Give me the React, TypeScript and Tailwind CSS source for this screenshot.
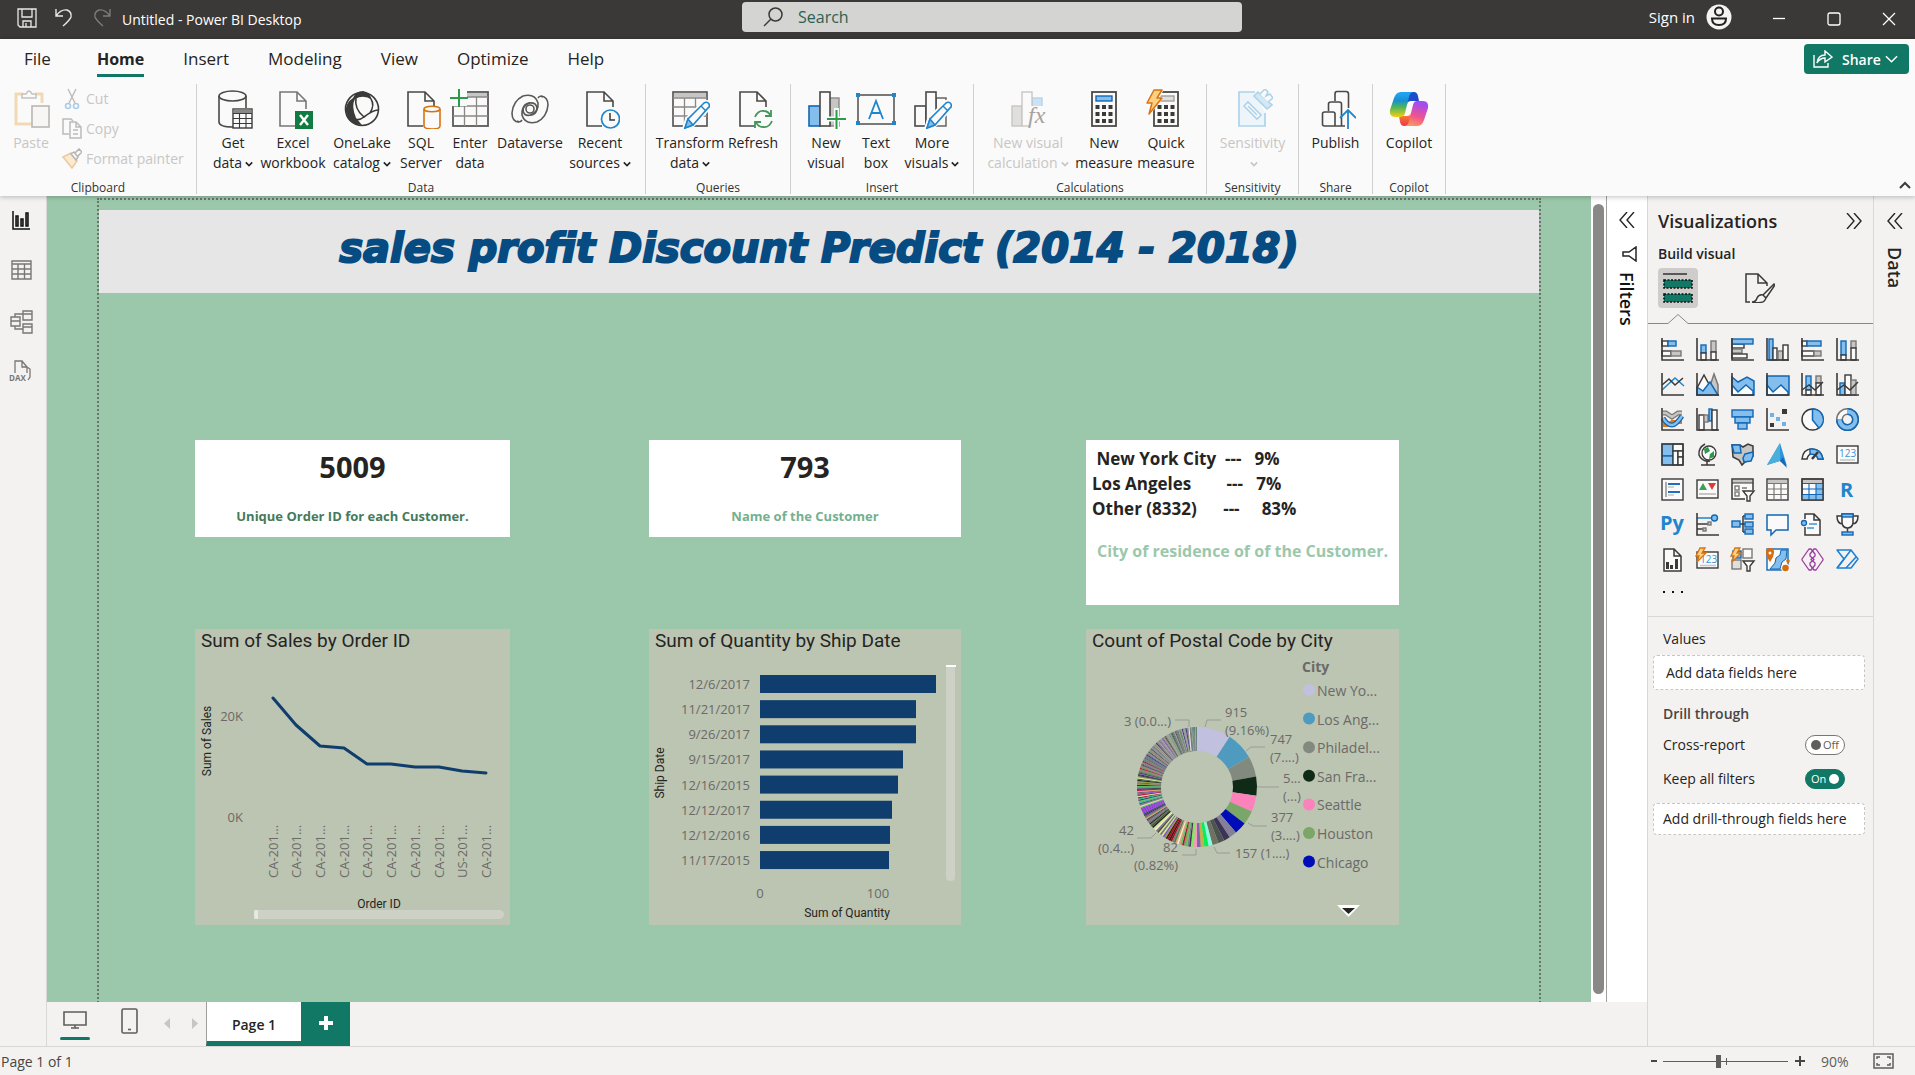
import React from "react";

const D = "#3b3a39";
const B = "#1267b4";
const LB = "#83beec";
const G = "#797775";
const LG = "#c8c6c4";
const W = "#fafafa";
const NAVY = "#0f3d6d";

type BoxProps = { x: number; y: number; w: number; h: number; f?: string; s?: string; sw?: number };
function R({ x, y, w, h, f = W, s = D, sw = 1.4 }: BoxProps) {
  return <rect x={x} y={y} width={w} height={h} fill={f} stroke={s} strokeWidth={sw} />;
}
function P({ d, s = D, f = "none", w = 1.5 }: { d: string; s?: string; f?: string; w?: number }) {
  return <path d={d} stroke={s} fill={f} strokeWidth={w} />;
}

/* ---------- ribbon icons, 40 x 40 ---------- */

function Icon40({ children }: { children: React.ReactNode }) {
  return (
    <svg viewBox="0 0 40 40" className="h-10 w-10" fill="none" aria-hidden="true">
      {children}
    </svg>
  );
}
const docPath = "M33 18V12L24 3H7V37H22M24 3V12H33";
const Doc = () => <P d={docPath} s="#4a4948" f={W} w={1.6} />;

const Bolt = () => (
  <path d="M8 1H16L11 9H16L3 25L6 14H1Z" fill="#fcd083" stroke="#d9730f" strokeWidth="1.5" strokeLinejoin="round" />
);
const Pen = () => (
  <g>
    <path d="M14 40L17 30L34 13Q37 12 39 14Q41 17 39 19L23 36Z" fill={W} stroke={W} strokeWidth="4" />
    <path d="M15 39L18 30L34 14Q37 12 39 15Q40 18 38 19L23 36Z" fill={W} stroke="#1f85cc" strokeWidth="1.6" />
    <path d="M15 39L18 30L23 36Z" fill={LB} stroke="#1f85cc" strokeWidth="1.5" />
    <path d="M31 17L36 22" stroke="#1f85cc" strokeWidth="1.4" />
  </g>
);
const Calc = ({ top, topStroke }: { top: string; topStroke: string }) => (
  <g>
    <R x={8} y={3} w={24} h={34} s="#4a4948" sw={1.8} />
    <R x={12} y={7} w={16} h={5} f={top} s={topStroke} />
    {[16, 23, 30].map((y) =>
      [11.5, 18, 24.5].map((x) => <rect key={`${x}-${y}`} x={x} y={y} width="4" height="4" fill={D} />)
    )}
  </g>
);

const icons: Record<string, React.ReactNode> = {
  paste: (
    <Icon40>
      <path d="M12 5H5V35H22" stroke="#f2d9b5" strokeWidth="3" />
      <path d="M24 5H31V14" stroke="#f2d9b5" strokeWidth="3" />
      <path d="M11 9V5H15Q18 -1 21 5H25V9Z" stroke="#c4c2c0" strokeWidth="1.5" fill={W} />
      <R x={21} y={17} w={17} h={21} s="#b9b7b5" sw={1.6} f="#f7f6f5" />
    </Icon40>
  ),
  get: (
    <Icon40>
      <path d="M6 7V33Q6 38 20 38M33 7V19" stroke="#4a4948" strokeWidth="1.6" />
      <ellipse cx="19.500" cy="7" rx="13.500" ry="5" stroke="#4a4948" strokeWidth="1.6" />
      <R x={20} y={20} w={19} h={19} s={D} />
      <rect x="20.500" y="20.500" width="18" height="4" fill="#8a8886" />
      <path d="M20 24.500H39M20 29.500H39M20 34.500H39M26.500 24V39M33 24V39" stroke={D} strokeWidth="1.1" />
    </Icon40>
  ),
  excel: (
    <Icon40>
      <P d="M33 20V12L24 3H7V37H22M24 3V12H33" s="#797775" f={W} w={1.6} />
      <rect x="22" y="22" width="18" height="18" fill="#107c41" />
      <path d="M27 26L35 36M35 26L27 36" stroke="white" strokeWidth="2.400" />
    </Icon40>
  ),
  onelake: (
    <Icon40>
      <circle cx="20" cy="20" r="16.500" stroke={D} strokeWidth="1.6" />
      <path d="M11 9Q14 2 21 2Q28 3 30 11Q22 5 13 10Q9 17 14 29L20 36Q7 36 4 23Q3 14 11 9Z" fill={D} />
      <path d="M14 9Q12 20 22 28Q31 21 36 21M22 28Q17 32 13 30M29 10Q33 16 28 24" stroke={D} strokeWidth="1.6" />
    </Icon40>
  ),
  sql: (
    <Icon40>
      <Doc />
      <path d="M23 20V37Q23 40 31.500 40Q39 40 39 37V20" fill={W} stroke="#d9730f" strokeWidth="1.6" />
      <ellipse cx="31" cy="20" rx="8" ry="2.800" fill={W} stroke="#d9730f" strokeWidth="1.6" />
    </Icon40>
  ),
  enter: (
    <Icon40>
      <R x={3} y={3} w={35} h={34} s="#5a5958" sw={1.8} />
      <rect x="15" y="4" width="22" height="4" fill={LG} />
      <path d="M3 17H38M3 27H38M14.500 8V37M26.500 8V37M14 8H38" stroke="#8a8886" strokeWidth="1.3" />
      <path d="M0 0H17V17H0Z" fill={W} />
      <path d="M9 0V18M0 9H18" stroke="#2b9a4a" strokeWidth="2" />
    </Icon40>
  ),
  dataverse: (
    <Icon40>
      <g stroke="#5a5958" strokeWidth="1.6">
        <path d="M9 33Q2 33 2 24Q3 12 13 7Q25 4 28 14Q29 22 21 26Q13 28 13 20Q14 14 20 14" />
        <path d="M31 7Q38 8 38 16Q37 28 27 33Q15 36 12 26Q11 18 19 14Q27 13 27 20Q26 26 20 26" />
        <path d="M28 9Q30 6 33 8M12 31Q10 34 7 32" />
        <circle cx="20" cy="20" r="4" />
      </g>
    </Icon40>
  ),
  recent: (
    <Icon40>
      <Doc />
      <circle cx="30.500" cy="30" r="9" fill={W} stroke="#1f85cc" strokeWidth="1.700" />
      <path d="M30 24V31H35" stroke={D} strokeWidth="1.500" />
    </Icon40>
  ),
  transform: (
    <Icon40>
      <R x={3} y={3} w={34} h={34} s="#5a5958" sw={1.7} />
      <rect x="4" y="4" width="32" height="4.500" fill={LG} />
      <path d="M3 9H37M3 18H37M3 27H37M14.500 9V37M25.500 9V37" stroke="#8a8886" strokeWidth="1.300" />
      <Pen />
    </Icon40>
  ),
  refresh: (
    <Icon40>
      <Doc />
      <circle cx="30" cy="30" r="10" fill={W} />
      <path d="M22 28Q25 21 31 22Q35 22 38 27M38 21V27H32M39 32Q36 39 30 38Q25 38 23 33M22 39V33H28" stroke="#45965a" strokeWidth="1.800" />
    </Icon40>
  ),
  newVisual: (
    <Icon40>
      <R x={24} y={9} w={9} h={28} f={LG} s="#8a8886" />
      <R x={3} y={17} w={11} h={20} f={LB} s={B} sw={1.6} />
      <R x={14} y={3} w={10} h={34} s="#4a4948" sw={1.6} />
      <path d="M30.500 19V40M20 30H40" stroke={W} strokeWidth="5" />
      <path d="M30.500 21V40M21 30H40" stroke="#2b9a4a" strokeWidth="2" />
    </Icon40>
  ),
  textBox: (
    <Icon40>
      <R x={2} y={6} w={36} h={29} s="#5a5958" sw={1.6} />
      <path d="M13 30L20 12L27 30M15.500 24H24.500" stroke="#1f85cc" strokeWidth="1.800" />
      {[0, 36].map((x) => [4, 32].map((y) => <rect key={`${x}${y}`} x={x} y={y} width="4" height="4" fill="#1f85cc" />))}
    </Icon40>
  ),
  moreVisuals: (
    <Icon40>
      <R x={24} y={9} w={10} h={28} s="#5a5958" />
      <R x={3} y={17} w={11} h={20} s="#4a4948" sw={1.6} />
      <R x={14} y={3} w={10} h={34} s="#4a4948" sw={1.6} />
      <Pen />
    </Icon40>
  ),
  visualCalc: (
    <Icon40>
      <R x={24} y={9} w={10} h={18} f="#c9e2f5" s="#b5d5ec" />
      <R x={4} y={17} w={10} h={20} f="#e1dfdd" s="#c8c6c4" />
      <R x={14} y={3} w={10} h={34} s="#c8c6c4" />
      <rect x="21" y="17" width="19" height="23" fill={W} />
      <text x="20" y="34" fontSize="24" fontStyle="italic" fill="#a5a3a1" className="font-['Liberation_Serif',serif]">
        fx
      </text>
    </Icon40>
  ),
  newMeasure: (
    <Icon40>
      <Calc top={LB} topStroke={B} />
    </Icon40>
  ),
  quickMeasure: (
    <Icon40>
      <Calc top="#e1dfdd" topStroke="#a19f9d" />
      <path d="M6 0H18L14 8H18L3 27V14H0Z" fill={W} />
      <Bolt />
    </Icon40>
  ),
  sensitivity: (
    <Icon40>
      <path d="M22 3H6V37H32V24" stroke="#add3ea" strokeWidth="1.700" fill="#edf5fa" />
      <g stroke="#add3ea" strokeWidth="1.600" fill={W}>
        <path d="M11 17L15 13L28 26L24 30Z" />
        <path d="M15 17L24 26" />
        <path d="M21 7L25 3L39 16L34 20Z" fill="#d3e8f5" />
        <path d="M27 5L32 0L35 3L33 7L37 5L40 9L35 13" />
      </g>
    </Icon40>
  ),
  publish: (
    <Icon40>
      <g stroke="#4a4948" strokeWidth="1.600">
        <path d="M19 12V5Q19 2.500 21 2.500H30Q32.500 2.500 32.500 5V19" />
        <path d="M12.500 22V15Q12.500 13 15 13H23Q25.500 13 25.500 15V37" />
        <path d="M6.500 25Q6.500 23 8.500 23H17Q19 23 19 25V37H8.500Q6.500 37 6.500 35ZM19 37H29" />
      </g>
      <path d="M32 40V21M24 29L32 21L40 29" stroke="#1f85cc" strokeWidth="1.800" />
    </Icon40>
  ),
  copilot: (
    <Icon40>
      <defs>
        <linearGradient id="cpA" x1="0" y1="0" x2="0" y2="1">
          <stop offset="0.100" stopColor="#1fa3ee" />
          <stop offset="0.350" stopColor="#168fd0" />
          <stop offset="0.600" stopColor="#4cb55c" />
          <stop offset="1" stopColor="#f5cf10" />
        </linearGradient>
        <linearGradient id="cpB" x1="0.300" y1="0" x2="0" y2="1">
          <stop offset="0" stopColor="#a44cf0" />
          <stop offset="0.500" stopColor="#f0528f" />
          <stop offset="1" stopColor="#ffa94f" />
        </linearGradient>
        <linearGradient id="cpC" x1="0" y1="0" x2="1" y2="1">
          <stop offset="0" stopColor="#1256c8" />
          <stop offset="1" stopColor="#2a3fd0" />
        </linearGradient>
        <linearGradient id="cpD" x1="0" y1="0" x2="0" y2="1">
          <stop offset="0" stopColor="#ff8a2a" />
          <stop offset="1" stopColor="#e8384f" />
        </linearGradient>
      </defs>
      <path d="M20 3H25Q28 3 29 7L30 12H22Q19 12 18 15Z" fill="url(#cpC)" />
      <path d="M10 27H18Q21 27 22 24L20 37H15Q12 37 11 33Z" fill="url(#cpD)" />
      <path d="M12 3H25Q21 3 20 8L16 24Q15 28 11 28H6Q0 28 1 21L5 9Q7 3 12 3Z" fill="url(#cpA)" />
      <path d="M28 12H34Q40 12 39 19L35 31Q33 37 28 37H15Q19 37 20 32L24 16Q25 12 28 12Z" fill="url(#cpB)" />
    </Icon40>
  ),
};

/* ---------- ribbon ---------- */

function Chev({ className = "" }: { className?: string }) {
  return (
    <svg viewBox="0 0 10 8" className={`inline h-2 w-2 ${className}`} fill="none" stroke="currentColor" strokeWidth="2" aria-hidden="true">
      <path d="M1 2L5 6L9 2" />
    </svg>
  );
}

type Item = { icon: string; lines: string[]; w: string; drop?: boolean; off?: boolean };
const groups: { name: string; w: string; items: Item[] }[] = [
  {
    name: "Data",
    w: "w-[449px]",
    items: [
      { icon: "get", lines: ["Get", "data"], w: "w-[52px]", drop: true },
      { icon: "excel", lines: ["Excel", "workbook"], w: "w-[68px]" },
      { icon: "onelake", lines: ["OneLake", "catalog"], w: "w-[70px]", drop: true },
      { icon: "sql", lines: ["SQL", "Server"], w: "w-[48px]" },
      { icon: "enter", lines: ["Enter", "data"], w: "w-[50px]" },
      { icon: "dataverse", lines: ["Dataverse"], w: "w-[70px]" },
      { icon: "recent", lines: ["Recent", "sources"], w: "w-[70px]", drop: true },
    ],
  },
  {
    name: "Queries",
    w: "w-[145px]",
    items: [
      { icon: "transform", lines: ["Transform", "data"], w: "w-[70px]", drop: true },
      { icon: "refresh", lines: ["Refresh"], w: "w-[56px]" },
    ],
  },
  {
    name: "Insert",
    w: "w-[183px]",
    items: [
      { icon: "newVisual", lines: ["New", "visual"], w: "w-[50px]" },
      { icon: "textBox", lines: ["Text", "box"], w: "w-[50px]" },
      { icon: "moreVisuals", lines: ["More", "visuals"], w: "w-[62px]", drop: true },
    ],
  },
  {
    name: "Calculations",
    w: "w-[233px]",
    items: [
      { icon: "visualCalc", lines: ["New visual", "calculation"], w: "w-[90px]", drop: true, off: true },
      { icon: "newMeasure", lines: ["New", "measure"], w: "w-[62px]" },
      { icon: "quickMeasure", lines: ["Quick", "measure"], w: "w-[62px]" },
    ],
  },
  { name: "Sensitivity", w: "w-[92px]", items: [{ icon: "sensitivity", lines: ["Sensitivity", ""], w: "w-[70px]", drop: true, off: true }] },
  { name: "Share", w: "w-[74px]", items: [{ icon: "publish", lines: ["Publish"], w: "w-[62px]" }] },
  { name: "Copilot", w: "w-[73px]", items: [{ icon: "copilot", lines: ["Copilot"], w: "w-[62px]" }] },
];

function Group({ name, w, children }: { name: string; w: string; children: React.ReactNode }) {
  return (
    <section aria-label={name} className={`flex h-[110px] shrink-0 flex-col border-r border-[#d2d0ce] ${w}`}>
      <div className="flex grow justify-center pt-[5px]">{children}</div>
      <div className="h-[14px] text-center text-[12px] leading-4 text-[#323130]">{name}</div>
    </section>
  );
}

function Ribbon() {
  return (
    <div className="flex items-start pt-1">
      <Group name="Clipboard" w="w-[197px]">
        <div className="flex w-full text-[#c8c6c4]">
          <button disabled className="flex w-[62px] flex-col items-center text-[14px] leading-5">
            {icons.paste}
            <span className="mt-1">Paste</span>
          </button>
          <div className="-mt-[5px] flex flex-col text-[14px] leading-[30px]">
            <button disabled className="flex items-center gap-1">
              <svg viewBox="0 0 20 22" className="h-[22px] w-5" fill="none" aria-hidden="true">
                <path d="M6 1L13 15M14 1L7 15" stroke="#c0bebc" strokeWidth="1.500" />
                <circle cx="6" cy="18" r="2.500" stroke="#a9cde6" strokeWidth="1.600" />
                <circle cx="14" cy="18" r="2.500" stroke="#a9cde6" strokeWidth="1.600" />
              </svg>
              Cut
            </button>
            <button disabled className="flex items-center gap-1">
              <svg viewBox="0 0 20 22" className="h-[22px] w-5" fill="none" stroke="#bdbbb9" strokeWidth="1.500" aria-hidden="true">
                <path d="M7 16H1V1H9L11 3" />
                <path d="M8 4H14L19 9V20H8ZM14 4V9H19M11 12H16M11 16H16" />
              </svg>
              Copy
            </button>
            <button disabled className="flex items-center gap-1">
              <svg viewBox="0 0 20 22" className="h-[22px] w-5" fill="none" aria-hidden="true">
                <path d="M1 9L9 5L15 13L10 20Z" fill="#fbe9d0" stroke="#edc9a0" strokeWidth="1.500" />
                <path d="M9 6L12 4L16 9L14 12ZM13 5L17 1L20 4L16 8" fill={W} stroke="#b5b3b1" strokeWidth="1.500" />
              </svg>
              Format painter
            </button>
          </div>
        </div>
      </Group>
      {groups.map((g) => (
        <Group key={g.name} name={g.name} w={g.w}>
          {g.items.map((it) => (
            <button
              key={it.icon}
              disabled={it.off}
              className={`flex shrink-0 flex-col items-center whitespace-nowrap text-[14px] leading-5 ${it.w} ${it.off ? "text-[#c8c6c4]" : "text-[#252423]"}`}
            >
              {icons[it.icon]}
              <span className="mt-1">{it.lines[0]}</span>
              {it.lines.length > 1 && (
                <span>
                  {it.lines[1]}
                  {it.drop && <Chev className="ml-[3px]" />}
                </span>
              )}
            </button>
          ))}
        </Group>
      ))}
      <button aria-label="Collapse ribbon" className="mt-[93px] mr-[2px] ml-auto flex h-4 w-4 items-center justify-center">
        <svg viewBox="0 0 12 8" className="h-2 w-3" fill="none" stroke={D} strokeWidth="2">
          <path d="M1 7L6 2L11 7" />
        </svg>
      </button>
    </div>
  );
}

/* ---------- visualization gallery icons, 23 x 23 ---------- */

const Axis = () => <path d="M1 0V22H23" stroke={D} strokeWidth="1.600" />;
const Funnel = () => <path d="M12 13H23L19 18V23H16V18Z" fill={W} stroke={D} strokeWidth="1.400" />;
const MiniBolt = () => <path d="M4 0H9L6 5H10L1 14L3 8H0Z" fill="#fcd083" stroke="#d9730f" strokeWidth="1.300" />;
const blueWord = "font-['Open_Sans',sans-serif] font-bold";

const gallery: [string, React.ReactNode][] = [
  ["Stacked bar chart", <><R x={1} y={3} w={6} h={5} /><R x={7} y={3} w={8} h={5} f={LB} s={B} /><R x={1} y={13} w={9} h={5} /><R x={10} y={13} w={10} h={5} f={LG} s={G} /><Axis /></>],
  ["Stacked column chart", <><R x={5} y={7} w={5} h={8} f={LB} s={B} /><R x={5} y={15} w={5} h={7} /><R x={15} y={3} w={5} h={11} f={LG} s={G} /><R x={15} y={14} w={5} h={8} /><Axis /></>],
  ["Clustered bar chart", <><R x={1} y={6} w={12} h={4} /><R x={1} y={11} w={10} h={4} f={LG} s={G} /><R x={1} y={16} w={15} h={4} /><R x={1} y={1} w={21} h={5} f={LB} s={B} /><Axis /></>],
  ["Clustered column chart", <><R x={3} y={1} w={4} h={21} f={LB} s={B} /><R x={7} y={10} w={4} h={12} /><R x={12} y={13} w={5} h={9} f={LG} s={G} /><R x={17} y={7} w={5} h={15} /><Axis /></>],
  ["100% stacked bar chart", <><R x={1} y={3} w={5} h={5} /><R x={6} y={3} w={14} h={5} f={LB} s={B} /><R x={1} y={13} w={12} h={5} /><R x={13} y={13} w={7} h={5} f={LG} s={G} /><Axis /></>],
  ["100% stacked column chart", <><R x={5} y={3} w={5} h={14} f={LB} s={B} /><R x={5} y={17} w={5} h={5} /><R x={15} y={3} w={5} h={7} f={LG} s={G} /><R x={15} y={10} w={5} h={12} /><Axis /></>],
  ["Line chart", <><P d="M1 17L14 5L23 13" s="#1f85cc" /><P d="M1 12L8 6L14 12L22 5" /><Axis /></>],
  ["Area chart", <><P d="M11 22L18 1L22 12V22Z" f={LG} s={G} /><P d="M1 15L8 2L15 15V22H1Z" f={W} /><P d="M1 14L7 18L14 9L22 22H1Z" f={LB} s={B} /><Axis /></>],
  ["Stacked area chart", <><P d="M1 4L7 9L16 4L23 8V22H1Z" f={LB} s={B} /><P d="M1 12L7 19L15 12L22 18V22H1Z" f={W} s={B} /><Axis /></>],
  ["100% stacked area chart", <><P d="M1 3H23V22H1Z" f={LB} s={B} /><P d="M1 12L7 19L15 12L22 19V22H1Z" f={W} s={B} /><Axis /></>],
  ["Line and stacked column chart", <><R x={5} y={3} w={5} h={14} f={LB} s={B} /><R x={5} y={17} w={5} h={5} /><R x={15} y={3} w={5} h={7} f={LG} s={G} /><R x={15} y={10} w={5} h={12} /><P d="M1 17L8 12L14 17L22 9" /><Axis /></>],
  ["Line and clustered column chart", <><R x={4} y={10} w={5} h={12} f={LB} s={B} /><R x={9} y={2} w={6} h={20} /><R x={15} y={7} w={5} h={15} f={LG} s={G} /><P d="M1 17L8 12L14 17L22 9" /><Axis /></>],
  ["Ribbon chart", <><path d="M2 17H7L11 14H21" stroke="#e07b17" strokeWidth="4" /><path d="M2 5H5L11 9L17 5H21" stroke={G} strokeWidth="5" /><path d="M2 5H5L11 9L17 5H21" stroke={LG} strokeWidth="2.500" /><path d="M2 10Q6 17 11 17Q15 17 21 8" stroke={B} strokeWidth="5" /><path d="M2 10Q6 17 11 17Q15 17 21 8" stroke={LB} strokeWidth="2.500" /><Axis /></>],
  ["Waterfall chart", <><R x={3} y={7} w={5} h={15} /><R x={8} y={7} w={4} h={7} f={LG} s={G} /><R x={13} y={1} w={3} h={12} f={LB} s={B} /><R x={16} y={2} w={5} h={20} /><Axis /></>],
  ["Funnel", <><R x={1} y={2} w={21} h={7} f={LB} s={B} /><R x={4} y={9} w={15} h={6} f={LB} s={B} /><R x={7} y={15} w={9} h={6} f={LB} s={B} /></>],
  ["Scatter chart", <><rect x="16" y="1" width="5" height="5" fill={D} /><rect x="4" y="5" width="4" height="4" fill="#6fb2e8" /><rect x="10" y="9" width="4" height="4" fill="#6fb2e8" /><rect x="16" y="14" width="4" height="4" fill="#6fb2e8" /><rect x="4" y="15" width="4" height="4" fill={D} /><Axis /></>],
  ["Pie chart", <><circle cx="11.5" cy="11.5" r="10.5" fill={W} stroke={D} strokeWidth="1.500" /><P d="M11.500 1A10.500 10.500 0 0 1 18 20L11.500 12Z" f={LB} s={B} /></>],
  ["Donut chart", <><circle cx="11.5" cy="11.5" r="8" stroke={G} strokeWidth="7" /><circle cx="11.5" cy="11.5" r="8" stroke={W} strokeWidth="4" /><path d="M11.500 3.500A8 8 0 1 1 3.500 11.500" stroke={B} strokeWidth="7" /><path d="M11.500 3.500A8 8 0 1 1 3.500 12" stroke={LB} strokeWidth="4" /></>],
  ["Treemap", <><R x={1} y={1} w={11} h={12} f={LB} s={B} /><R x={1} y={13} w={11} h={9} f={LB} s={B} /><R x={12} y={1} w={10} h={7} /><R x={12} y={8} w={5} h={14} /><R x={17} y={8} w={5} h={6} /><R x={17} y={14} w={5} h={8} /><R x={1} y={1} w={21} h={21} f="none" /></>],
  ["Map", <><circle cx="13" cy="10" r="7" fill={W} stroke={D} strokeWidth="1.300" /><path d="M8 6L12 4L14 8L9 11ZM14 11L18 8L18 14L13 16Z" fill="#2b9a4a" /><path d="M9 1Q2 5 3 12Q6 19 14 18M11 18V22M5 22H19" stroke={D} strokeWidth="1.500" /></>],
  ["Filled map", <><P d="M1 2H9L12 4L17 1L22 3V13L19 17L14 19L11 22L8 17L2 14Z" f={LG} s={D} /><P d="M1 2H9L10 10H3Z" f={LB} s={B} /><P d="M14 11L22 9V13L20 18L13 19L12 15Z" f={LB} s={B} /></>],
  ["Azure map", <><path d="M14 0L21 23L14 18L1 22Z" fill="#3193d8" /><path d="M14 0L1 22L14 18Z" fill="#4bafdc" /><path d="M14 18L21 25L17 14Z" fill="#1567b8" /></>],
  ["Gauge", <><P d="M1 16Q2 6 11 6Q20 6 22 16H17Q16 11 11 11Q7 11 6 16Z" f={W} /><P d="M9 6Q20 5 22 16H17Q16 11 9 11Z" f={LB} s={B} /><P d="M11 16L17 9" w={2.500} /></>],
  ["Card", <><R x={1} y={3} w={21} h={17} /><text x="3" y="14" fontSize="10" fill="#3a95d5" className="font-['Open_Sans',sans-serif]">123</text><P d="M4 17H19" s={LG} /></>],
  ["Multi-row card", <><R x={1} y={1} w={21} h={21} /><P d="M5 4V19" s={G} w={1.200} /><P d="M7 6H19M7 14H19" s="#1f6fbd" w={2} /><P d="M7 9H13M7 17H13" s={LG} w={1.500} /></>],
  ["KPI", <><R x={1} y={2} w={21} h={18} /><path d="M3 12L7 5L11 12Z" fill="#3f9f58" /><path d="M12 5H20L16 12Z" fill="#dd3a3a" /><P d="M3 16H20" s={LG} w={2} /></>],
  ["Slicer", <><path d="M14 21H1V1H22V12" fill={W} stroke={D} strokeWidth="1.500" /><rect x="2" y="2" width="19" height="3" fill={LG} /><P d="M1 5H22" w={1} /><R x={4} y={8} w={4} h={4} s={G} /><R x={4} y={14} w={4} h={4} s={G} /><P d="M11 10H16" s={G} /><Funnel /></>],
  ["Table", <><R x={1} y={1} w={21} h={21} /><rect x="2" y="2" width="19" height="3" fill={LG} /><P d="M1 5.500H22M1 11H22M1 16.500H22M8 5V22M15 5V22" s={G} w={1.200} /></>],
  ["Matrix", <><R x={1} y={1} w={21} h={21} /><rect x="2" y="2" width="19" height="3" fill={LG} /><path d="M15 6H22V22H1V16H15Z" fill={LB} /><P d="M1 5.500H22M1 11H22M1 16.500H22M8 5V22M15 5V22" s={B} w={1.100} /><R x={1} y={1} w={21} h={21} f="none" /></>],
  ["R script visual", <text x="4" y="19" fontSize="20" fill="#1f85cc" className={blueWord}>R</text>],
  ["Python visual", <text x="-1" y="17" fontSize="20" fill="#1f85cc" className={blueWord}>Py</text>],
  ["Key influencers", <><P d="M1 5H16" s="#1f85cc" /><circle cx="18.500" cy="5" r="3" fill={LB} stroke={B} strokeWidth="1.400" /><P d="M1 11H12M1 16H7" /><R x={12} y={9} w={3} h={3} f={LG} s={G} /><R x={7} y={15} w={3} h={3} f={LG} s={G} /><Axis /></>],
  ["Decomposition tree", <><P d="M9 11H15M12 3V19M12 3H15M12 19H15" /><R x={1} y={8} w={8} h={6} f={LB} s={B} /><R x={14} y={1} w={8} h={5} f={LB} s={B} /><R x={14} y={9} w={8} h={5} f={LB} s={B} /><R x={14} y={16} w={8} h={5} f={LB} s={B} /></>],
  ["Q&A", <P d="M1 2H22V17H10L5 22V17H1Z" f={W} s={B} />],
  ["Smart narrative", <><P d="M4 6V1H13L19 7V22H4V14M13 1V7H19" f={W} /><circle cx="3" cy="10" r="2.500" fill={LB} stroke={B} strokeWidth="1.300" /><P d="M8 11H16M6 15H13" s="#3a95d5" /></>],
  ["Goals", <><P d="M6 1H17V10Q16 15 11.500 15Q7 15 6 10ZM6 3H1Q1 11 7 11M17 3H22Q22 11 16 11M11.500 15V19" f={W} /><R x={6} y={1} w={11} h={3} f={LB} s={B} /><R x={6} y={19} w={11} h={3} f={LB} s={B} /></>],
  ["Paginated report", <><P d="M3 1H13L20 8V23H3ZM13 1V8H20" f={W} /><path d="M5 14H8V21H5ZM9 17H12V21H9ZM14 11H17V21H14Z" fill={D} /></>],
  ["New card", <><R x={1} y={4} w={21} h={16} /><text x="4" y="15" fontSize="10" fill="#3a95d5" className="font-['Open_Sans',sans-serif]">123</text><P d="M4 17.500H20" s={LG} /><MiniBolt /></>],
  ["New slicer", <><R x={12} y={1} w={9} h={9} s={G} /><R x={1} y={12} w={9} h={9} s={G} f="#e1dfdd" /><R x={2} y={3} w={8} h={7} f={LB} s={B} /><MiniBolt /><Funnel /></>],
  ["ArcGIS maps", <><R x={1} y={1} w={21} h={21} f={W} s={B} /><path d="M21 2H15L14 7L10 10L9 15L4 21H14L16 14L20 11Z" fill={LB} stroke={B} /><path d="M0 4Q0 0 4 0Q8 0 8 4Q8 8 4 14Q0 8 0 4Z" fill="#d96b08" /><circle cx="4" cy="5" r="1.500" fill={W} /><circle cx="19.500" cy="20" r="4.500" fill={W} /><circle cx="19.500" cy="20" r="3.300" fill="#d96b08" /><circle cx="22" cy="13" r="1.800" fill="#d96b08" /></>],
  ["Power Apps", <g stroke="#9b3aa0" strokeWidth="1.300" strokeLinejoin="round"><path d="M8 1H10L14 6V8L10 11.500L14 15V17L10 22H8L1 12V11Z" /><path d="M13 1H15L22 11V12L15 22H13L9 17V15L13 11.500L9 8V6Z" /></g>],
  ["Power Automate", <g stroke="#1a7fd8" strokeWidth="1.500" strokeLinejoin="round"><path d="M1 2H15L22 11L15 20H1L8 11Z" /><path d="M15 2L2 19M20 9L10 20" /></g>],
];

/* ---------- report visuals ---------- */

const chartTitle = "font-['Roboto',sans-serif]";
const sans = "font-['Open_Sans',sans-serif]";
const chartInk = "#252423";
const axisInk = "#6b6a68";

function SalesLine() {
  const pts: [number, number][] = [
    [78, 69], [101, 96], [125, 117], [149, 119], [172, 135], [196, 135], [220, 138], [244, 138], [267, 142], [291, 144],
  ];
  return (
    <svg viewBox="0 0 315 296" className="block w-full bg-[#bcc4b2]" role="img" aria-label="Sum of Sales by Order ID">
      <text x="6" y="18" fontSize="19" fill={chartInk} className={chartTitle}>Sum of Sales by Order ID</text>
      <text transform="translate(16 112) rotate(-90)" textAnchor="middle" fontSize="12" fill={chartInk} className={chartTitle}>Sum of Sales</text>
      <path d="M58 88H309M58 189H309" stroke="#c3c8bb" strokeDasharray="1 4" />
      <g fontSize="13" fill={axisInk} className={sans}>
        <text x="48" y="92" textAnchor="end">20K</text>
        <text x="48" y="193" textAnchor="end">0K</text>
        {pts.map(([x], i) => (
          <text key={x} transform={`translate(${x + 5} 249) rotate(-90)`}>{i === 8 ? "US-201..." : "CA-201..."}</text>
        ))}
      </g>
      <polyline points={pts.map((p) => p.join(",")).join(" ")} fill="none" stroke={NAVY} strokeWidth="3" strokeLinecap="round" strokeLinejoin="round" />
      <text x="184" y="279" textAnchor="middle" fontSize="12" fill={chartInk} className={chartTitle}>Order ID</text>
      <rect x="59" y="281" width="250" height="9" rx="4.500" fill="#cdd1c6" />
      <path d="M60 281V290M62 281V290" stroke="white" />
    </svg>
  );
}

function QuantityBars() {
  const rows: [string, number][] = [
    ["12/6/2017", 176], ["11/21/2017", 156], ["9/26/2017", 156], ["9/15/2017", 143],
    ["12/16/2015", 138], ["12/12/2017", 132], ["12/12/2016", 130], ["11/17/2015", 129],
  ];
  return (
    <svg viewBox="0 0 312 296" className="block w-full bg-[#bcc4b2]" role="img" aria-label="Sum of Quantity by Ship Date">
      <text x="6" y="18" fontSize="19" fill={chartInk} className={chartTitle}>Sum of Quantity by Ship Date</text>
      <text transform="translate(15 144) rotate(-90)" textAnchor="middle" fontSize="12" fill={chartInk} className={chartTitle}>Ship Date</text>
      <g fontSize="13" fill={axisInk} className={sans}>
        {rows.map(([label, w], i) => (
          <g key={label}>
            <text x="101" y={60 + i * 25.15} textAnchor="end">{label}</text>
            <rect x="111" y={46 + i * 25.15} width={w} height="18" fill={NAVY} />
          </g>
        ))}
        <text x="111" y="269" textAnchor="middle">0</text>
        <text x="229" y="269" textAnchor="middle">100</text>
      </g>
      <text x="198" y="288" textAnchor="middle" fontSize="12" fill={chartInk} className={chartTitle}>Sum of Quantity</text>
      <rect x="297" y="36" width="9" height="216" rx="4" fill="#cdd1c6" />
      <path d="M297 37H307" stroke="white" strokeWidth="2" />
    </svg>
  );
}

const tints = [
  "#3c3355", "#2e4f4b", "#d9e69a", "#1d3a2b", "#5a4a3a", "#e0a070", "#2fb6a8", "#4d7a52", "#7d7a8c", "#3b1d8f",
  "#8b9a3f", "#6f7f7c", "#14301f", "#b0123a", "#f0f0d0", "#8a4fd0", "#515b63", "#9aa58d", "#5cc46c", "#7a5c72",
];
const faded = ["#767f74", "#8a8a96", "#5f7a6c", "#a08790", "#6d6a80", "#93a08e", "#557f78", "#8f7a6a", "#a59cb5", "#6a8a5c"];

function slices() {
  const head: [number, string][] = [
    [33, "#c1c1df"], [60, "#4f9bbf"], [80, "#828a80"], [98.5, "#0f2a17"], [114, "#fc82bb"], [127.5, "#7aa667"],
    [139.5, "#000cb8"], [147, "#85809a"], [153, "#3c3355"], [159, "#4a5552"], [165, "#6f705f"], [169, "#86fbe2"],
    [173, "#07ef56"], [176.5, "#c3b04a"], [180, "#7a68a8"], [183, "#f59abf"], [186, "#84e85a"],
  ];
  const out: { a: number; b: number; c: string }[] = [];
  let a = 0;
  for (const [end, c] of head) {
    out.push({ a, b: end, c });
    a = end;
  }
  let i = 0;
  while (a < 360) {
    const step = a < 230 ? 1.7 : a < 280 ? 1.2 : 0.9;
    const b = Math.min(360, a + step);
    const k = (i * 7 + ((i * i) % 11)) % 20;
    const red = a > 203 && a < 210;
    const violet = a > 243 && a < 249;
    out.push({ a, b, c: red ? (i % 2 ? "#b00a1c" : "#3d1515") : violet ? "#9136d8" : a > 285 ? (i % 4 === 0 ? tints[k] : faded[k % 10]) : tints[k] });
    a = b;
    i++;
  }
  return out;
}

function arc(a: number, b: number) {
  const pt = (deg: number, r: number) => {
    const t = ((deg - 90) * Math.PI) / 180;
    return `${(111 + r * Math.cos(t)).toFixed(2)} ${(158 + r * Math.sin(t)).toFixed(2)}`;
  };
  return `M${pt(a, 60)}A60 60 0 0 1 ${pt(b, 60)}L${pt(b, 36)}A36 36 0 0 0 ${pt(a, 36)}Z`;
}

function CityDonut() {
  const legend: [string, string][] = [
    ["New Yo...", "#c1c1df"], ["Los Ang...", "#4f9bbf"], ["Philadel...", "#828a80"], ["San Fra...", "#0f2a17"],
    ["Seattle", "#fc82bb"], ["Houston", "#7aa667"], ["Chicago", "#000cb8"],
  ];
  const labels: [number, number, string][] = [
    [139, 88, "915"], [139, 106, "(9.16%)"], [184, 115, "747"], [184, 133, "(7....)"], [197, 154, "5..."], [197, 172, "(...)"],
    [185, 193, "377"], [185, 211, "(3....)"], [149, 229, "157 (1....)"], [77, 223, "82"], [48, 241, "(0.82%)"],
    [33, 206, "42"], [12, 224, "(0.4...)"], [38, 97, "3 (0.0...)"],
  ];
  return (
    <svg viewBox="0 0 313 296" className="block w-full bg-[#bcc4b2]" role="img" aria-label="Count of Postal Code by City">
      <text x="6" y="18" fontSize="19" fill={chartInk} className={chartTitle}>Count of Postal Code by City</text>
      {slices().map((s) => (
        <path key={s.a} d={arc(s.a, s.b)} fill={s.c} />
      ))}
      <path d="M105 122L103 98" stroke="#e8ebe4" />
      <path
        d="M119 98L121 91H135M160 122L165 118H179M171 158H193M162 194L167 197H181M128 218L131 224H144M110 220V226H96M70 204L65 209H51M103 98V91H89"
        fill="none"
        stroke="#9a9d92"
      />
      <g fontSize="13" fill={axisInk} className={sans}>
        {labels.map(([x, y, t]) => (
          <text key={`${x}-${y}`} x={x} y={y}>{t}</text>
        ))}
      </g>
      <g fontSize="14" fill={axisInk} className={sans}>
        <text x="216" y="43" fontWeight="700">City</text>
        {legend.map(([t, c], i) => (
          <g key={t}>
            <circle cx="223" cy={61 + i * 28.6} r="6" fill={c} />
            <text x="231" y={67 + i * 28.6}>{t}</text>
          </g>
        ))}
      </g>
      <path d="M251 276H274L262.500 288Z" fill="white" />
      <path d="M256 279H269L262.500 285Z" fill={chartInk} />
    </svg>
  );
}

function Canvas() {
  return (
    <div className="min-w-0 grow overflow-hidden bg-[#9bc8ab] pt-[2px] pr-[50px] pl-[50px]">
      <div className="flex h-[820px] flex-col border-2 border-dotted border-[#6c756d] pt-[10px]">
        <h1 className="h-[83px] shrink-0 bg-[#e6e6e6] text-center font-['DejaVu_Sans',sans-serif] text-[40px] leading-[76px] font-bold whitespace-nowrap text-[#064b82] italic [-webkit-text-stroke:2px_#064b82]">
          sales profit Discount Predict (2014 - 2018)
        </h1>
        <div className="mt-[147px] grid grid-cols-[315fr_139fr_312fr_125fr_313fr] pr-[140px] pl-24">
          <div className="col-start-1 flex h-[97px] flex-col items-center bg-white pt-1">
            <strong className="text-[29px] leading-[46px] font-bold text-[#252423]">5009</strong>
            <span className="mt-4 text-[13px] leading-5 font-bold text-[#457a5c]">Unique Order ID for each Customer.</span>
          </div>
          <div className="col-start-3 flex h-[97px] flex-col items-center bg-white pt-1">
            <strong className="text-[29px] leading-[46px] font-bold text-[#252423]">793</strong>
            <span className="mt-4 text-[13px] leading-5 font-bold text-[#74b08e]">Name of the Customer</span>
          </div>
          <div className="col-start-5 h-[165px] bg-white pt-[6px] pl-[6px] text-[17px] leading-[25px] font-bold whitespace-pre text-[#252423]">
            <div>{" New York City  ---   9%"}</div>
            <div>{"Los Angeles        ---   7%"}</div>
            <div>{"Other (8332)      ---     83%"}</div>
            <div className="mt-[18px] pr-[6px] text-center text-[16px] text-[#9bc8ab]">City of residence of of the Customer.</div>
          </div>
          <div className="col-start-1 mt-6"><SalesLine /></div>
          <div className="col-start-3 mt-6"><QuantityBars /></div>
          <div className="col-start-5 mt-6"><CityDonut /></div>
        </div>
      </div>
    </div>
  );
}

/* ---------- side panes ---------- */

function DoubleChevron({ flip = false }: { flip?: boolean }) {
  return (
    <svg viewBox="0 0 16 16" className="h-4 w-4" fill="none" stroke="#252423" strokeWidth="1.400" aria-hidden="true">
      {flip ? <path d="M1 0L8 8L1 16M8 0L15 8L8 16" /> : <path d="M8 0L1 8L8 16M15 0L8 8L15 16" />}
    </svg>
  );
}

function LeftRail() {
  const svg = "h-6 w-6";
  return (
    <nav aria-label="Views" className="flex w-[47px] shrink-0 flex-col border-r border-[#dad8d6] bg-[#f3f2f1] pt-px pl-[9px] text-[#797775]">
      <button aria-label="Report view" className="h-[50px]">
        <svg viewBox="0 0 24 24" className={svg} fill="none" stroke="#111" strokeWidth="1.500">
          <path d="M4 1V19H21" /><path d="M7 6H9V16H7ZM12 9H14V16H12ZM17 3H19V16H17Z" fill="#8a8886" />
        </svg>
      </button>
      <button aria-label="Table view" className="h-[50px]">
        <svg viewBox="0 0 24 24" className={svg} fill="none" stroke="currentColor" strokeWidth="1.400">
          <path d="M3 1H22V19H3ZM3 4H22M3 9H22M3 14H22M9 4V19M15.500 4V19" />
        </svg>
      </button>
      <button aria-label="Model view" className="h-[50px]">
        <svg viewBox="0 0 24 24" className={svg} fill="none" stroke="currentColor" strokeWidth="1.400">
          <path d="M2 7H11V16H2ZM2 11H11M14 1H23V10H14ZM14 4H23M14 14H23V23H14ZM14 17H23M6 7V4H14M6 16V19H14" />
        </svg>
      </button>
      <button aria-label="DAX query view" className="h-[50px]">
        <svg viewBox="0 0 24 24" className={svg} fill="none" stroke="currentColor" strokeWidth="1.300">
          <path d="M6 13V1H13L18 7V13M13 1V7H18M18 7L21 9V17L19 20" />
          <text x="0" y="21" fontSize="8" fill="currentColor" stroke="none" fontWeight="700" className={sans}>DAX</text>
        </svg>
      </button>
    </nav>
  );
}

function FiltersPane() {
  return (
    <aside aria-label="Filters" className="flex h-[806px] w-[41px] shrink-0 flex-col items-center border-l border-[#a19f9d] bg-white pt-4">
      <button aria-label="Expand filters"><DoubleChevron /></button>
      <svg viewBox="0 0 16 16" className="mt-[18px] ml-[4px] h-4 w-4" fill="none" stroke="#252423" strokeWidth="1.500" aria-hidden="true">
        <path d="M15 1V15L8 10H2V6H8Z" />
      </svg>
      <h2 className="mt-[10px] text-[18px] leading-6 font-semibold text-[#111] [writing-mode:vertical-rl]">Filters</h2>
    </aside>
  );
}

function Toggle({ label, on }: { label: string; on: boolean }) {
  return (
    <label className="flex items-center justify-between pr-[28px] pl-[15px] leading-[34px]">
      {label}
      <span className={`relative flex h-5 w-10 items-center rounded-full border text-[11px] ${on ? "border-[#117865] bg-[#117865] pl-[5px] text-white" : "justify-end border-[#797775] bg-white pr-[5px] text-[#605e5c]"}`}>
        <input type="checkbox" role="switch" defaultChecked={on} className="absolute inset-0 m-0 h-full w-full cursor-pointer appearance-none" />
        {on ? "On" : "Off"}
        <span className={`pointer-events-none absolute h-[10px] w-[10px] rounded-full ${on ? "right-[5px] bg-white" : "left-[5px] bg-[#605e5c]"}`} />
      </span>
    </label>
  );
}

function VisualizationsPane() {
  return (
    <aside className="flex w-[226px] shrink-0 flex-col border-l border-[#dad8d6] bg-[#f3f2f1] text-[14px] text-[#252423]">
      <div className="flex items-center justify-between pt-[13px] pr-[11px] pl-[10px]">
        <h2 className="text-[18px] leading-6 font-semibold">Visualizations</h2>
        <button aria-label="Collapse pane"><DoubleChevron flip /></button>
      </div>
      <h3 className="mt-[11px] pl-[10px] text-[14px] leading-5 font-semibold">Build visual</h3>
      <div className="mt-1 flex gap-[42px] pl-[10px]">
        <button aria-label="Build visual" className="flex h-10 w-10 items-center justify-center rounded-sm bg-[#cfcdcb]">
          <svg viewBox="0 0 30 30" className="h-[30px] w-[30px]">
            <path d="M0 1H24" stroke={D} strokeWidth="1.600" />
            <path d="M1 7H29V15H1ZM1 21H29V29H1Z" fill="#117865" stroke="#111" strokeWidth="1.600" strokeDasharray="2 1.500" />
          </svg>
        </button>
        <button aria-label="Format visual" className="flex h-10 w-10 items-center justify-center">
          <svg viewBox="0 0 30 30" className="h-[30px] w-[30px]" fill="none" stroke={D} strokeWidth="1.500">
            <path d="M5 29H1V1H13L22 10V13M13 1V10H22M22 10V13" />
            <path d="M29 11L18 22L21 25L30 12ZM18 22Q14 21 12 25Q11 29 7 29Q18 31 20 27L21 25" />
          </svg>
        </button>
      </div>
      <div className="mt-[6px] flex h-[10px]">
        <span className="w-5 border-b border-[#8a8886]" />
        <svg viewBox="0 0 20 10" className="h-[10px] w-5" fill="none" stroke="#8a8886" aria-hidden="true">
          <path d="M0 9.500L10 0.500L20 9.500" />
        </svg>
        <span className="grow border-b border-[#8a8886]" />
      </div>
      <div className="mt-2 grid grid-cols-[repeat(6,35px)] pl-[13px]">
        {gallery.map(([name, art]) => (
          <button key={name} aria-label={name} className="h-[35px]">
            <svg viewBox="0 0 23 23" className="block h-[23px] w-[23px] overflow-visible" fill="none">
              {art}
            </svg>
          </button>
        ))}
      </div>
      <button aria-label="More visuals" className="mt-[11px] ml-[15px] flex h-2 w-5 items-center justify-between">
        {[0, 1, 2].map((i) => <span key={i} className="h-[2px] w-[2px] bg-[#111]" />)}
      </button>
      <div className="mt-5 border-t border-[#dad8d6] pt-3">
        <h3 className="pl-[15px] leading-5">Values</h3>
        <div className="mt-[6px] mr-2 ml-[5px] rounded-sm border border-dashed border-[#c8c6c4] bg-white pl-3 leading-[33px]">Add data fields here</div>
        <h3 className="mt-[14px] pl-[15px] leading-5 font-semibold text-[#484644]">Drill through</h3>
        <div className="mt-1">
          <Toggle label="Cross-report" on={false} />
          <Toggle label="Keep all filters" on />
        </div>
        <div className="mt-[7px] mr-2 ml-[5px] rounded-sm border border-dashed border-[#c8c6c4] bg-white pl-[9px] leading-[30px] whitespace-nowrap">Add drill-through fields here</div>
      </div>
    </aside>
  );
}

/* ---------- page ---------- */

function TitleBar() {
  return (
    <header className="flex h-[39px] shrink-0 bg-[#3b3937] text-white">
      <div className="flex flex-[725] items-start gap-[18px] pt-2 pl-[17px]">
        <button aria-label="Save">
          <svg viewBox="0 0 20 20" className="h-5 w-5" fill="none" stroke="#e8e8e8" strokeWidth="1.300">
            <path d="M1 1H19V19H3L1 17ZM5 1V9H15V1M6 19V13H14V19M9 15V19" />
          </svg>
        </button>
        <button aria-label="Undo">
          <svg viewBox="0 0 20 20" className="h-5 w-5" fill="none" stroke="#e8e8e8" strokeWidth="1.400">
            <path d="M1 1V8H8M1 8Q6 1 12 2Q17 4 16 9Q15 12 8 18" />
          </svg>
        </button>
        <button aria-label="Redo">
          <svg viewBox="0 0 20 20" className="h-5 w-5" fill="none" stroke="#7d7b79" strokeWidth="1.400">
            <path d="M17 1V8H10M17 8Q12 1 6 2Q1 4 2 9Q3 12 10 18" />
          </svg>
        </button>
        <span className="-ml-[9px] text-[14px] leading-6">Untitled - Power BI Desktop</span>
      </div>
      <label className="mt-[2px] flex h-[30px] flex-[479] items-center rounded-sm bg-[#d4d4d2] pl-[21px]">
        <svg viewBox="0 0 20 20" className="h-5 w-5 shrink-0" fill="none" stroke="#3b3937" strokeWidth="1.500" aria-hidden="true">
          <circle cx="12.500" cy="7.500" r="6.500" />
          <path d="M8 12L1 19" />
        </svg>
        <input type="search" aria-label="Search" placeholder="Search" className="ml-[15px] w-full bg-transparent text-[16px] outline-none placeholder:text-[#2c6152]" />
      </label>
      <div className="flex flex-[654] items-start justify-end pr-[19px]">
        <button className="mt-1 flex items-center gap-[11px] text-[15px] leading-[26px]">
          Sign in
          <svg viewBox="0 0 26 26" className="h-[26px] w-[26px]">
            <circle cx="13" cy="13" r="12.500" fill="#f5f4f2" />
            <circle cx="13" cy="7.500" r="4" fill="none" stroke="#222" strokeWidth="2" />
            <path d="M6 14.500H20Q20 21 13 21Q6 21 6 14.500Z" fill="none" stroke="#222" strokeWidth="2" />
          </svg>
        </button>
        <div className="mt-[12px] ml-[40px] flex gap-[41px]">
          {[["Minimize", "M1 6.500H13"], ["Maximize", "M3 1H11Q13 1 13 3V11Q13 13 11 13H3Q1 13 1 11V3Q1 1 3 1Z"], ["Close", "M1 1L13 13M13 1L1 13"]].map(([n, d]) => (
            <button key={n} aria-label={n}>
              <svg viewBox="0 0 14 14" className="h-[14px] w-[14px]" fill="none" stroke="#fff" strokeWidth="1.300"><path d={d} /></svg>
            </button>
          ))}
        </div>
      </div>
    </header>
  );
}

function TabRow() {
  return (
    <div className="flex h-[41px] items-start justify-between pr-[6px] pl-6">
      <nav aria-label="Ribbon tabs" className="flex gap-[39px] text-[17px] leading-10 text-[#252423]">
        <button className="mr-[7px]">File</button>
        <button aria-current="page" className="h-[38px] border-b-[3px] border-[#117865] text-[16px] font-bold">Home</button>
        <button>Insert</button>
        <button>Modeling</button>
        <button>View</button>
        <button>Optimize</button>
        <button>Help</button>
      </nav>
      <button className="mt-[5px] flex h-[30px] w-[105px] items-center rounded bg-[#117865] pl-[9px] text-[14px] font-semibold text-white">
        <svg viewBox="0 0 20 18" className="h-[18px] w-5" fill="none" stroke="#fff" strokeWidth="1.400" aria-hidden="true">
          <path d="M1 5V17H15V13M4 13Q5 5 12 5V1L19 7L12 12V8Q7 8 4 13Z" />
        </svg>
        <span className="ml-[9px]">Share</span>
        <svg viewBox="0 0 14 8" className="ml-1 h-2 w-[13px]" fill="none" stroke="#fff" strokeWidth="1.600" aria-hidden="true"><path d="M1 1L7 7L13 1" /></svg>
      </button>
    </div>
  );
}

function PageTabs() {
  return (
    <div className="flex h-11 shrink-0 items-stretch">
      <button aria-label="Desktop layout" className="ml-[13px] flex w-[30px] flex-col items-center pt-[9px]">
        <svg viewBox="0 0 24 18" className="h-[18px] w-6" fill="none" stroke="#605e5c" strokeWidth="1.600">
          <path d="M1 1H23V14H1ZM12 14V17M8 17H16" />
        </svg>
        <span className="mt-2 h-[3px] w-full rounded-full bg-[#117865]" />
      </button>
      <button aria-label="Mobile layout" className="ml-[31px] flex pt-[6px]">
        <svg viewBox="0 0 17 26" className="h-[26px] w-[17px]" fill="none" stroke="#605e5c" strokeWidth="1.600">
          <rect x="1" y="1" width="15" height="24" rx="1.500" /><path d="M7 21.500H10" />
        </svg>
      </button>
      <button aria-label="Previous page" className="ml-[26px] flex pt-4">
        <svg viewBox="0 0 6 11" className="h-[11px] w-[6px]" fill="#c8c6c4"><path d="M6 0V11L0 5.500Z" /></svg>
      </button>
      <button aria-label="Next page" className="ml-[22px] flex pt-4">
        <svg viewBox="0 0 6 11" className="h-[11px] w-[6px]" fill="#c8c6c4"><path d="M0 0V11L6 5.500Z" /></svg>
      </button>
      <button className="ml-2 w-[95px] border-b-[5px] border-l border-b-[#117865] border-l-[#a19f9d] bg-white pt-[6px] text-[14px] font-semibold text-[#252423]">Page 1</button>
      <button aria-label="New page" className="flex w-[49px] items-center justify-center bg-[#117865] pb-[3px]">
        <svg viewBox="0 0 14 14" className="h-[14px] w-[14px]" stroke="#fff" strokeWidth="4"><path d="M7 0V14M0 7H14" /></svg>
      </button>
    </div>
  );
}

function StatusBar() {
  return (
    <footer className="flex h-[29px] shrink-0 items-center border-t border-[#dad8d6] bg-[#f3f2f1] text-[14px] text-[#484644]">
      <span className="pl-[1px]">Page 1 of 1</span>
      <button aria-label="Zoom out" className="ml-auto flex h-4 w-3 items-center">
        <span className="h-[2px] w-[6px] bg-[#484644]" />
      </button>
      <div className="relative flex w-[125px] items-center">
        <input
          type="range"
          aria-label="Zoom"
          min={0}
          max={100}
          defaultValue={44}
          className="h-[14px] w-full appearance-none bg-transparent [&::-webkit-slider-runnable-track]:h-px [&::-webkit-slider-runnable-track]:bg-[#605e5c] [&::-webkit-slider-thumb]:-mt-[6px] [&::-webkit-slider-thumb]:h-[13px] [&::-webkit-slider-thumb]:w-[5px] [&::-webkit-slider-thumb]:appearance-none [&::-webkit-slider-thumb]:bg-[#605e5c]"
        />
        <span className="pointer-events-none absolute left-1/2 h-[7px] w-px bg-[#605e5c]" />
      </div>
      <button aria-label="Zoom in" className="ml-[7px]">
        <svg viewBox="0 0 10 10" className="h-[10px] w-[10px]" stroke="#484644" strokeWidth="2"><path d="M5 0V10M0 5H10" /></svg>
      </button>
      <span className="ml-4 w-[52px] text-[#605e5c]">90%</span>
      <button aria-label="Fit to page" className="mr-[21px]">
        <svg viewBox="0 0 21 16" className="h-4 w-[21px]" fill="none" stroke="#605e5c" strokeWidth="1.500">
          <path d="M1 1H20V15H1Z" />
          <path d="M4 6V4H7M14 4H17V6M17 10V12H14M7 12H4V10" />
        </svg>
      </button>
    </footer>
  );
}

export default function App() {
  return (
    <div className="flex h-screen flex-col overflow-hidden bg-[#f3f2f1] font-['Open_Sans','Noto_Sans',sans-serif]">
      <TitleBar />
      <div className="relative h-[157px] shrink-0 bg-[#fafafa] shadow-[0_1px_5px_rgba(0,0,0,0.25)]">
        <TabRow />
        <Ribbon />
      </div>
      <main className="flex min-h-0 grow">
        <LeftRail />
        <div className="flex min-w-0 grow flex-col">
          <div className="flex min-h-0 grow">
            <Canvas />
            <div className="w-[15px] shrink-0 bg-white pt-2 pb-2 pl-[2px]">
              <div className="h-full w-[11px] rounded-full bg-[#8a8886]" />
            </div>
          </div>
          <PageTabs />
        </div>
        <FiltersPane />
        <VisualizationsPane />
        <aside aria-label="Data" className="flex w-[42px] shrink-0 flex-col items-center border-l border-[#dad8d6] bg-[#f3f2f1] pt-[17px]">
          <button aria-label="Expand data"><DoubleChevron /></button>
          <h2 className="mt-[18px] text-[18px] leading-6 font-semibold text-[#252423] [writing-mode:vertical-rl]">Data</h2>
        </aside>
      </main>
      <StatusBar />
    </div>
  );
}
